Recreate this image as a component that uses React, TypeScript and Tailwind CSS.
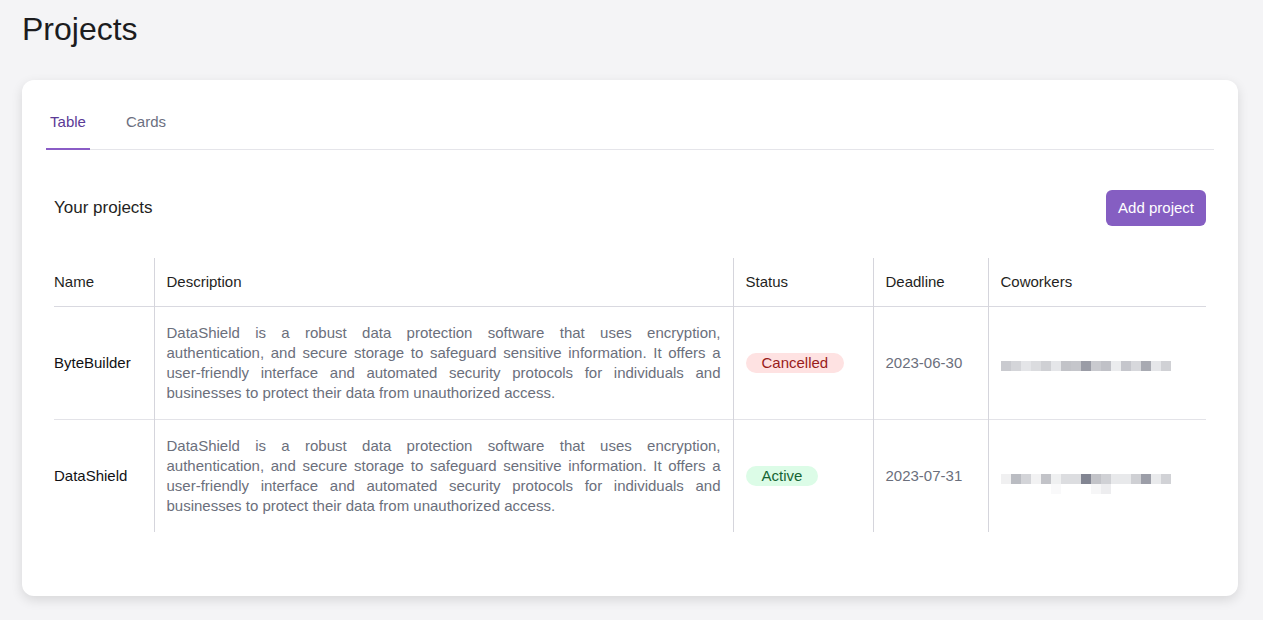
const DESCRIPTION =
  'DataShield is a robust data protection software that uses encryption, authentication, and secure storage to safeguard sensitive information. It offers a user-friendly interface and automated security protocols for individuals and businesses to protect their data from unauthorized access.';

// blurred avatar strips, one colour per 10px block
const blurRows: { top: string[]; bottom?: (string | null)[] }[] = [
  {
    top: ['#c9cacf', '#d4d5d9', '#e4e5e8', '#dbdcdf', '#cfd0d4', '#e5e6e9', '#c2c3c8', '#c5c6cb', '#9a9ca6', '#c9cacf', '#c0c1c7', '#ebecee', '#c5c6cc', '#d7d8dc', '#a8aab2', '#e5e6e9', '#d0d1d5'],
  },
  {
    top: ['#f0f0f1', '#babcc2', '#d3d4d8', '#f2f2f3', '#c2c3c8', '#eff0f1', '#dcdde0', '#dcdde0', '#828592', '#c2c3c8', '#d0d1d5', '#e8e9eb', '#e8e9eb', '#cfd0d4', '#9c9ea8', '#e9eaec', '#d1d2d6'],
    bottom: [null, null, null, null, null, '#f9f9fa', null, null, null, '#f6f6f7', '#ededef', null, null, null, null, null, null],
  },
];

const projects = [
  { name: 'ByteBuilder', status: 'Cancelled', deadline: '2023-06-30' },
  { name: 'DataShield', status: 'Active', deadline: '2023-07-31' },
];

function StatusBadge({ status }: { status: string }) {
  const cls =
    status === 'Active'
      ? 'bg-[#dcfce7] text-[#166534]'
      : 'bg-[#fee2e2] text-[#991b1b]';
  return (
    <span className={`inline-block rounded-full px-4 text-[15px] leading-5 ${cls}`}>
      {status}
    </span>
  );
}

function Coworkers({ index }: { index: number }) {
  const row = blurRows[index];
  return (
    <div className="relative h-[10px] mt-[5px]">
      <div className="flex">
        {row.top.map((c, i) => (
          <div key={i} className="w-[10px] h-[10px]" style={{ backgroundColor: c }} />
        ))}
      </div>
      {row.bottom && (
        <div className="absolute left-0 top-[10px] flex">
          {row.bottom.map((c, i) => (
            <div key={i} className="w-[10px] h-[10px]" style={{ backgroundColor: c ?? 'transparent' }} />
          ))}
        </div>
      )}
    </div>
  );
}

export default function App() {
  return (
    <div className="min-h-screen bg-[#f4f4f6] pl-[22px] pr-[25px] pb-6 font-['Liberation_Sans',Arial,sans-serif]">
      <h1 className="pt-[9px] text-[32px] leading-10 text-[#1c1c1e] mb-[31px]">Projects</h1>

      <div className="rounded-xl bg-white shadow-[0_4px_12px_rgba(0,0,0,0.12)] px-6 pt-6 pb-6">
        {/* Tabs */}
        <div className="flex gap-[33px] border-b border-[#e5e5ea]">
          <button className="-mb-px w-[44px] pt-[7px] pb-[15px] border-b-2 border-[#8a5cc6] text-[15px] leading-[22px] text-[#5b3a96]">
            Table
          </button>
          <button className="-mb-px px-[3px] pt-[7px] pb-[15px] border-b-2 border-transparent text-[15px] leading-[22px] text-[#6b6f80]">
            Cards
          </button>
        </div>

        <div className="px-2 pt-10 pb-10">
          <div className="flex items-center justify-between h-9">
            <h2 className="text-[17px] text-[#1f1f23]">Your projects</h2>
            <button className="h-9 rounded-md bg-[#855ec2] px-3 text-[15px] font-medium text-white">
              Add project
            </button>
          </div>

          <table className="mt-8 w-[1152px] table-fixed border-collapse text-[15px] leading-5">
            <colgroup>
              <col className="w-[100px]" />
              <col className="w-[579px]" />
              <col className="w-[140px]" />
              <col className="w-[115px]" />
              <col className="w-[218px]" />
            </colgroup>
            <thead>
              <tr className="border-b border-[#d9d9e0] text-left text-[#1f1f23]">
                <th className="py-[14px] pr-3 font-normal">Name</th>
                <th className="py-[14px] px-3 font-normal border-l border-[#d5d5dc]">Description</th>
                <th className="py-[14px] px-3 font-normal border-l border-[#d5d5dc]">Status</th>
                <th className="py-[14px] px-3 font-normal border-l border-[#d5d5dc]">Deadline</th>
                <th className="py-[14px] px-3 font-normal border-l border-[#d5d5dc]">Coworkers</th>
              </tr>
            </thead>
            <tbody>
              {projects.map((p, i) => (
                <tr key={p.name} className={i < projects.length - 1 ? 'border-b border-[#e3e3e8]' : ''}>
                  <td className="py-4 pr-3 align-middle text-[#111114]">{p.name}</td>
                  <td className="py-4 px-3 border-l border-[#d5d5dc] text-justify text-[#6b6f7c]">
                    {DESCRIPTION}
                  </td>
                  <td className="py-4 px-3 border-l border-[#d5d5dc] align-middle">
                    <StatusBadge status={p.status} />
                  </td>
                  <td className="py-4 px-3 border-l border-[#d5d5dc] align-middle text-[#6b6f7c]">
                    {p.deadline}
                  </td>
                  <td className="py-4 px-3 border-l border-[#d5d5dc] align-middle">
                    <Coworkers index={i} />
                  </td>
                </tr>
              ))}
            </tbody>
          </table>
        </div>
      </div>
    </div>
  );
}
